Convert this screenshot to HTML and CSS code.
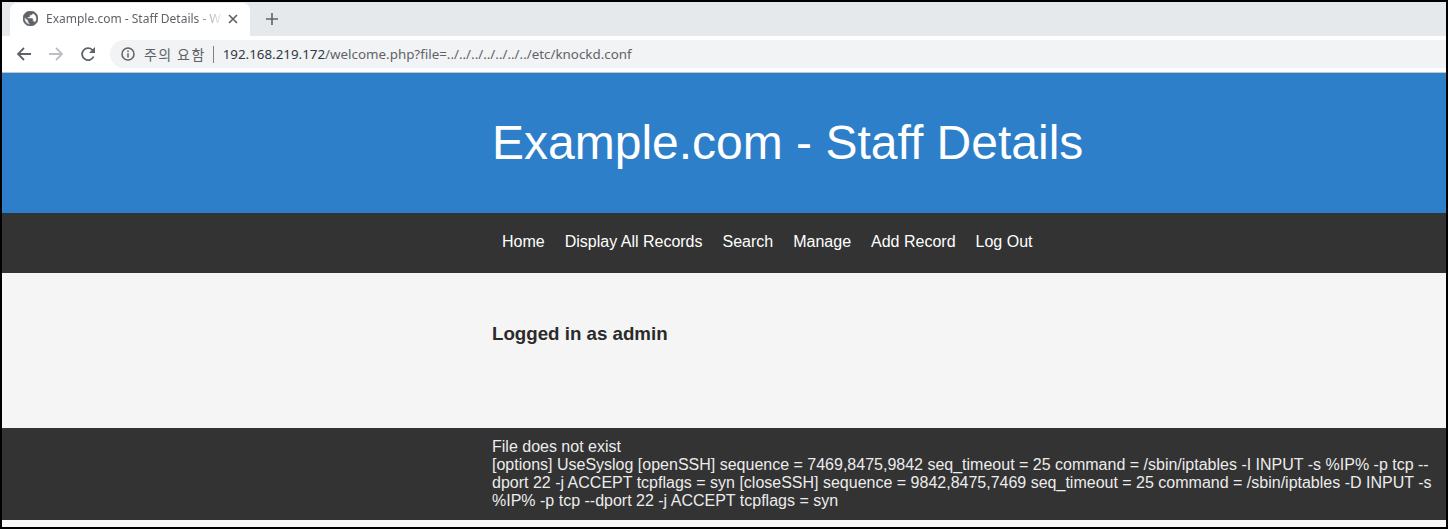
FILE: index.html
```html
<!DOCTYPE html>
<html lang="en">
<head>
<meta charset="utf-8">
<title>Example.com - Staff Details</title>
<link rel="stylesheet" href="styles.css">
</head>
<body>
<div class="frame">
  <div class="tabstrip">
    <div class="tab">
      <svg class="globe" viewBox="2 2 20 20" width="15" height="15"><circle cx="12" cy="12" r="10" fill="#fff"/><path d="M12 2C6.480 2 2 6.480 2 12s4.480 10 10 10 10-4.480 10-10S17.520 2 12 2zm-1 17.930c-3.950-.490-7-3.850-7-7.930 0-.620.080-1.210.210-1.790L9 15v1c0 1.100.900 2 2 2v1.930zm6.900-2.540c-.260-.810-1-1.390-1.900-1.390h-1v-3c0-.550-.450-1-1-1H8v-2h2c.550 0 1-.450 1-1V7h2c1.100 0 2-.900 2-2v-.410c2.930 1.190 5 4.060 5 7.410 0 2.080-.800 3.970-2.100 5.390z" fill="#5f6368" stroke="#5f6368" stroke-width="0.800"/></svg>
      <span class="tab-title">Example.com - Staff Details - W</span>
      <svg class="tab-close" viewBox="0 0 10 10" width="10" height="10"><path d="M1 1l8 8M9 1 1 9" stroke="#5f6368" stroke-width="1.700" fill="none"/></svg>
    </div>
    <svg class="new-tab" viewBox="0 0 12 12" width="12" height="12"><path d="M6 0v12M0 6h12" stroke="#5f6368" stroke-width="1.600" fill="none"/></svg>
  </div>
  <div class="toolbar">
    <svg class="nav-btn" viewBox="0 0 16 16" width="16" height="16"><path d="M15 8H2M8 2 2 8l6 6" stroke="#5f6368" stroke-width="1.800" fill="none"/></svg>
    <svg class="nav-btn" viewBox="0 0 16 16" width="16" height="16"><path d="M1 8h13M8 2l6 6-6 6" stroke="#bcc0c4" stroke-width="1.800" fill="none"/></svg>
    <svg class="nav-btn" viewBox="0 0 16 16" width="16" height="16"><path d="M13.600 10.500A6 6 0 1 1 12.300 3.800L14.500 6" stroke="#5f6368" stroke-width="1.800" fill="none"/><path d="M15 1v6H9z" fill="#5f6368"/></svg>
    <div class="omnibox">
      <svg class="info" viewBox="0 0 14 14" width="14" height="14"><circle cx="7" cy="7" r="6" stroke="#5f6368" stroke-width="1.500" fill="none"/><path d="M7 6.200V10.500M7 3.500V5" stroke="#5f6368" stroke-width="1.500" fill="none"/></svg>
      <span class="warn">주의 요함</span>
      <span class="divider"></span>
      <span class="url"><span class="host">192.168.219.172</span>/welcome.php?file=../../../../../../../etc/knockd.conf</span>
    </div>
  </div>
  <header class="masthead"><h1>Example.com - Staff Details</h1></header>
  <nav class="menu">
    <a href="#">Home</a>
    <a href="#">Display All Records</a>
    <a href="#">Search</a>
    <a href="#">Manage</a>
    <a href="#">Add Record</a>
    <a href="#">Log Out</a>
  </nav>
  <main class="content"><h3>Logged in as admin</h3></main>
  <footer class="output">
    <div class="output-text">File does not exist<br>[options] UseSyslog [openSSH] sequence = 7469,8475,9842 seq_timeout = 25 command = /sbin/iptables -I INPUT -s %IP% -p tcp --dport 22 -j ACCEPT tcpflags = syn [closeSSH] sequence = 9842,8475,7469 seq_timeout = 25 command = /sbin/iptables -D INPUT -s %IP% -p tcp --dport 22 -j ACCEPT tcpflags = syn</div>
  </footer>
  <div class="page-end"></div>
</div>
</body>
</html>
```
FILE: styles.css
```css
* { box-sizing: border-box; }
html, body { margin: 0; height: 100%; overflow: hidden; }
body { background: #000; font-family: "Liberation Sans", Arial, sans-serif; }
.frame { height: 529px; padding: 2px; display: flex; flex-direction: column; }
.tabstrip { height: 34px; flex: none; background: #e6e9ec; display: flex; align-items: flex-end; padding-left: 8px; }
.tab { width: 240px; height: 33px; background: #fff; border-radius: 7px 7px 0 0; display: flex; align-items: center; padding: 0 8px 2px 13px; font-family: "Noto Sans", "Open Sans", sans-serif; font-size: 12px; color: #5f6368; }
.globe { flex: none; }
.tab-title { flex: 1; margin-left: 8px; white-space: nowrap; -webkit-mask-image: linear-gradient(to right, #000 150px, transparent 178px); mask-image: linear-gradient(to right, #000 150px, transparent 178px); }
.tab-close { flex: none; margin-left: 6px; margin-right: 4px; }
.new-tab { margin: 0 0 11px 16px; }
.toolbar { height: 37px; flex: none; background: #fff; border-bottom: 1px solid #c4c6c8; display: flex; align-items: center; padding-left: 14px; }
.nav-btn { flex: none; margin-right: 16px; }
.nav-btn:nth-child(3) { margin-right: 14px; }
.omnibox { flex: 1; height: 28px; background: #f1f3f4; border-radius: 14px 0 0 14px; display: flex; align-items: center; padding-left: 11px; font-family: "Noto Sans", "Open Sans", sans-serif; font-size: 14px; color: #5f6368; white-space: nowrap; }
.info { flex: none; }
.warn { margin-left: 9px; font-family: "Noto Sans CJK KR", sans-serif; font-size: 14px; letter-spacing: 1.400px; }
.divider { width: 1px; height: 17px; background: #7d8185; margin: 0 9px 0 7px; }
.url { font-size: 13.360px; }
.host { color: #303a48; }
.masthead { height: 140px; flex: none; background: #2d7fc9; color: #fff; padding: 39px 0 0 490px; }
.masthead h1 { margin: 0; font-weight: 400; font-size: 48px; line-height: 62px; }
.menu { height: 60px; flex: none; background: #333; display: flex; align-items: center; padding: 0 0 2px 490px; }
.menu a { color: #fff; text-decoration: none; font-size: 16px; padding: 0 10px; }
.content { flex: 1; background: #f5f5f5; padding: 50px 0 0 490px; }
.content h3 { margin: 0; font-size: 18.720px; line-height: 22px; color: #2b2b2b; }
.output { height: 92px; flex: none; background: #333; color: #ececec; font-size: 16px; line-height: 18px; padding: 10px 0 0 490px; }
.output-text { width: 944px; }
.page-end { height: 7px; flex: none; background: #f8f8f8; }
```
